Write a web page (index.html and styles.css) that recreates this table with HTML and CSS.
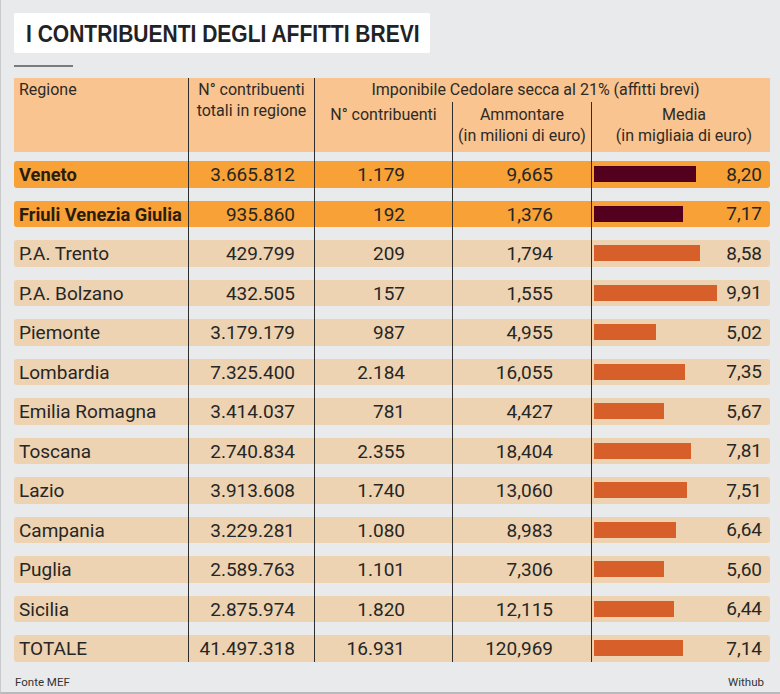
FILE: index.html
```html
<!DOCTYPE html>
<html lang="it">
<head>
<meta charset="utf-8">
<title>I contribuenti degli affitti brevi</title>
<link rel="stylesheet" href="styles.css">
</head>
<body>
<div class="page">
  <h1 class="title"><span class="title-text">I CONTRIBUENTI DEGLI AFFITTI BREVI</span></h1>
  <div class="rule"></div>
  <div class="table">
    <div class="head">
      <div class="h-reg">Regione</div>
      <div class="h-tot">N° contribuenti<br>totali in regione</div>
      <div class="h-group">
        <div class="h-group-title">Imponibile Cedolare secca al 21% (affitti brevi)</div>
        <div class="h-sub">
          <div class="h-c3">N° contribuenti</div>
          <div class="h-c4">Ammontare<br>(in milioni di euro)</div>
          <div class="h-c5">Media<br>(in migliaia di euro)</div>
        </div>
      </div>
    </div>

    <div class="row hl first"><div class="c c1"><div class="band">Veneto</div></div><div class="c c2"><div class="band">3.665.812</div></div><div class="c c3"><div class="band">1.179</div></div><div class="c c4"><div class="band">9,665</div></div><div class="c c5"><div class="band"><span class="bar" style="width:102px"></span><span class="val">8,20</span></div></div></div>
    <div class="row hl"><div class="c c1"><div class="band">Friuli Venezia Giulia</div></div><div class="c c2"><div class="band">935.860</div></div><div class="c c3"><div class="band">192</div></div><div class="c c4"><div class="band">1,376</div></div><div class="c c5"><div class="band"><span class="bar" style="width:89px"></span><span class="val">7,17</span></div></div></div>
    <div class="row"><div class="c c1"><div class="band">P.A. Trento</div></div><div class="c c2"><div class="band">429.799</div></div><div class="c c3"><div class="band">209</div></div><div class="c c4"><div class="band">1,794</div></div><div class="c c5"><div class="band"><span class="bar" style="width:106px"></span><span class="val">8,58</span></div></div></div>
    <div class="row"><div class="c c1"><div class="band">P.A. Bolzano</div></div><div class="c c2"><div class="band">432.505</div></div><div class="c c3"><div class="band">157</div></div><div class="c c4"><div class="band">1,555</div></div><div class="c c5"><div class="band"><span class="bar" style="width:123px"></span><span class="val">9,91</span></div></div></div>
    <div class="row"><div class="c c1"><div class="band">Piemonte</div></div><div class="c c2"><div class="band">3.179.179</div></div><div class="c c3"><div class="band">987</div></div><div class="c c4"><div class="band">4,955</div></div><div class="c c5"><div class="band"><span class="bar" style="width:62px"></span><span class="val">5,02</span></div></div></div>
    <div class="row"><div class="c c1"><div class="band">Lombardia</div></div><div class="c c2"><div class="band">7.325.400</div></div><div class="c c3"><div class="band">2.184</div></div><div class="c c4"><div class="band">16,055</div></div><div class="c c5"><div class="band"><span class="bar" style="width:91px"></span><span class="val">7,35</span></div></div></div>
    <div class="row"><div class="c c1"><div class="band">Emilia Romagna</div></div><div class="c c2"><div class="band">3.414.037</div></div><div class="c c3"><div class="band">781</div></div><div class="c c4"><div class="band">4,427</div></div><div class="c c5"><div class="band"><span class="bar" style="width:70px"></span><span class="val">5,67</span></div></div></div>
    <div class="row"><div class="c c1"><div class="band">Toscana</div></div><div class="c c2"><div class="band">2.740.834</div></div><div class="c c3"><div class="band">2.355</div></div><div class="c c4"><div class="band">18,404</div></div><div class="c c5"><div class="band"><span class="bar" style="width:97px"></span><span class="val">7,81</span></div></div></div>
    <div class="row"><div class="c c1"><div class="band">Lazio</div></div><div class="c c2"><div class="band">3.913.608</div></div><div class="c c3"><div class="band">1.740</div></div><div class="c c4"><div class="band">13,060</div></div><div class="c c5"><div class="band"><span class="bar" style="width:93px"></span><span class="val">7,51</span></div></div></div>
    <div class="row"><div class="c c1"><div class="band">Campania</div></div><div class="c c2"><div class="band">3.229.281</div></div><div class="c c3"><div class="band">1.080</div></div><div class="c c4"><div class="band">8,983</div></div><div class="c c5"><div class="band"><span class="bar" style="width:82px"></span><span class="val">6,64</span></div></div></div>
    <div class="row"><div class="c c1"><div class="band">Puglia</div></div><div class="c c2"><div class="band">2.589.763</div></div><div class="c c3"><div class="band">1.101</div></div><div class="c c4"><div class="band">7,306</div></div><div class="c c5"><div class="band"><span class="bar" style="width:70px"></span><span class="val">5,60</span></div></div></div>
    <div class="row"><div class="c c1"><div class="band">Sicilia</div></div><div class="c c2"><div class="band">2.875.974</div></div><div class="c c3"><div class="band">1.820</div></div><div class="c c4"><div class="band">12,115</div></div><div class="c c5"><div class="band"><span class="bar" style="width:80px"></span><span class="val">6,44</span></div></div></div>
    <div class="row"><div class="c c1"><div class="band">TOTALE</div></div><div class="c c2"><div class="band">41.497.318</div></div><div class="c c3"><div class="band">16.931</div></div><div class="c c4"><div class="band">120,969</div></div><div class="c c5"><div class="band"><span class="bar" style="width:89px"></span><span class="val">7,14</span></div></div></div>
  </div>
  <div class="footer">
    <span>Fonte MEF</span>
    <span>Withub</span>
  </div>
</div>
</body>
</html>
```

FILE: styles.css
```css
* { box-sizing: border-box; }
html, body { margin: 0; padding: 0; }
body {
  width: 780px;
  height: 694px;
  background: #e9eaec;
  font-family: Roboto, "Liberation Sans", sans-serif;
  color: #2a2a2a;
}
.page {
  width: 780px;
  height: 694px;
  padding: 13px 10px 0 13px;
  border-left: 1px solid #c9cacc;
  border-bottom: 2px solid #b9babc;
  background: #e9eaec;
}
.title {
  margin: 0;
  width: 416px;
  height: 40px;
  background: #fff;
  border-radius: 2px;
  padding: 0 0 0 12px;
  font-family: "Liberation Sans", Arial, sans-serif;
  font-weight: bold;
  font-size: 24px;
  line-height: 41px;
  color: #1f2326;
  white-space: nowrap;
  overflow: hidden;
}
.title-text {
  display: inline-block;
  transform: scaleX(0.875);
  transform-origin: left center;
}
.rule {
  width: 59px;
  height: 2px;
  background: #7a7b7d;
  margin-top: 12px;
}
.table {
  margin-top: 11px;
  width: 756px;
}
.head {
  display: grid;
  grid-template-columns: 174px 126px 456px;
  height: 74px;
  background: #f9c48f;
  font-size: 16px;
  line-height: 21px;
  color: #2e2a26;
}
.h-reg { padding: 1px 0 0 5px; }
.h-tot {
  border-left: 1px solid #2e2e2e;
  text-align: center;
  padding-top: 1px;
}
.h-group {
  border-left: 1px solid #2e2e2e;
  display: flex;
  flex-direction: column;
}
.h-group-title {
  text-align: center;
  padding: 1px 14px 0 0;
  height: 24px;
}
.h-sub {
  flex: 1;
  display: grid;
  grid-template-columns: 137px 139px 179px;
}
.h-sub > div { text-align: center; padding-top: 2px; }
.h-c4, .h-c5 { border-left: 1px solid #2e2e2e; }
.h-c5 { padding-left: 6px; }

.row {
  display: grid;
  grid-template-columns: 174px 126px 138px 139px 179px;
  font-size: 19px;
  color: #262626;
}
.c { padding-top: 13px; }
.row.first .c { padding-top: 9px; }
.c2, .c3, .c4, .c5 { border-left: 1px solid #2e2e2e; }
.band {
  height: 26.5px;
  line-height: 27px;
  background: #edd3b1;
  white-space: nowrap;
}
.c1 .band { padding-left: 5px; border-radius: 3px 0 0 3px; }
.c2 .band { text-align: right; padding-right: 19px; }
.c3 .band { text-align: right; padding-right: 47px; }
.c4 .band { text-align: right; padding-right: 38px; }
.c5 .band {
  display: flex;
  align-items: center;
  justify-content: space-between;
  padding: 0 8px 0 2px;
  border-radius: 0 3px 3px 0;
}
.bar {
  display: block;
  height: 16px;
  background: #d75f29;
}
.row.hl .band { background: #f7a136; }
.row.hl .c1 .band { font-weight: bold; font-size: 18.3px; color: #2b1c0e; }
.row.hl .bar { background: #53001f; }

.footer {
  display: flex;
  justify-content: space-between;
  padding: 13px 6px 0 1px;
  font-size: 11.5px;
  color: #333;
}
```
